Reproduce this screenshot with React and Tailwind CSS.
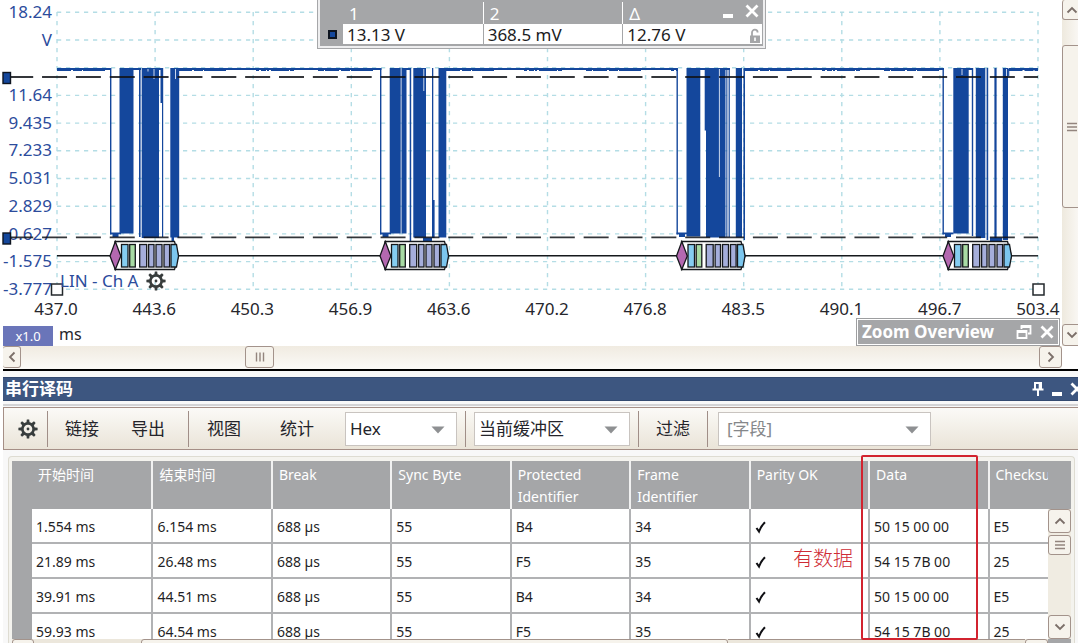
import React from "react";

const SANS = "font-['Noto_Sans','Noto_Sans_CJK_SC',sans-serif]";
const BLUE = "#14479c";

const yLabels = ["18.24", "V", "", "11.64", "9.435", "7.233", "5.031", "2.829", "0.627", "-1.575", "-3.777"];
const xLabels = ["437.0", "443.6", "450.3", "456.9", "463.6", "470.2", "476.8", "483.5", "490.1", "496.7", "503.4"];

const bursts = [
  {
    x: 110,
    blocks: [[119.5, 133.5, 233.5], [139, 140.6, 237], [141.7, 159, 238], [162, 163.2, 237], [170.3, 178.5, 237.5], [171.5, 174, 241]],
    partial: [[160.5, 162, 103]],
    tops: [[133, 141], [157, 163]],
    notches: [[148, 71.5], [154, 79], [175.5, 79]],
  },
  {
    x: 380,
    blocks: [[389.7, 400.7, 233.5], [401.5, 406.5, 233.5], [409.7, 411.2, 241], [413.3, 426, 237.5], [432, 433.3, 238], [438.5, 446.3, 237.5]],
    partial: [],
    tops: [[404, 411]],
    notches: [[423.8, 91]],
    feet: [[423, 432, 241], [432, 434.6, 238]],
  },
  {
    x: 676.5,
    blocks: [[686.5, 700.3, 236.5], [706, 725.5, 237.5], [726.3, 727.4, 237], [728.6, 729.8, 237], [735.8, 742, 237.5], [743.6, 745, 240]],
    partial: [[704.7, 706.5, 130.5]],
    tops: [[700, 706], [725, 730]],
    notches: [[719.4, 177]],
  },
  {
    x: 942.5,
    blocks: [[953.3, 968.7, 233.5], [971.8, 973.2, 236], [975.8, 985.3, 238], [986.6, 988.2, 240], [994.4, 996.6, 241], [1002.8, 1008, 240]],
    partial: [],
    tops: [[968, 973]],
    notches: [[962, 75], [1006.5, 76]],
    feet: [[990, 1002, 241]],
  },
];

const frames = [0, 270, 566.5, 833];

function Burst({ b }) {
  return (
    <g fill={BLUE}>
      <rect x={b.x} y="68" width="1.4" height="166.5" />
      <rect x={b.x} y="232.5" width="11" height="1.8" />
      <rect x={b.x + 2.5} y="233" width="6" height="4" />
      {b.blocks.map(([x1, x2, y], i) => (
        <rect key={i} x={x1} y="68" width={x2 - x1} height={y - 68} />
      ))}
      {b.partial.map(([x1, x2, y], i) => (
        <rect key={i} x={x1} y="69" width={x2 - x1} height={y - 69} />
      ))}
      {b.tops.map(([x1, x2], i) => (
        <rect key={i} x={x1} y="68" width={x2 - x1} height="2" />
      ))}
      {(b.feet || []).map(([x1, x2, y], i) => (
        <rect key={i} x={x1} y={x2 - x1 < 4 ? 200 : 237.5} width={x2 - x1} height={x2 - x1 < 4 ? y - 200 : y - 237.5} />
      ))}
      {b.notches.map(([x, y], i) => (
        <rect key={i} x={x - 0.5} y="69" width="1" height={y - 69} fill="#c9d6ec" />
      ))}
    </g>
  );
}

function Frame({ dx }) {
  const boxes = [
    [121.5, 6.5, "#86cdf1"],
    [129.7, 5.6, "#a8dba4"],
    [139.7, 7, "#a5aedb"],
    [148.6, 5.4, "#a5aedb"],
    [156, 6, "#a5aedb"],
    [164, 5.6, "#a5aedb"],
  ];
  return (
    <g transform={`translate(${dx} 0)`} stroke="#15181c" strokeWidth="1.3">
      <path d="M115 241.5H174.5L178.5 256L174.5 269.5H115Z" fill="#fff" />
      <path d="M115.3 241.5L120.8 256L115.3 269.5L110 256Z" fill="#b468b0" />
      {boxes.map(([x, w, c]) => (
        <rect key={x} x={x} y="244.5" width={w} height="22.5" fill={c} />
      ))}
      <path d="M171 244.5H176.5L178.5 256L176.5 267H171Z" fill="#7cc6ee" />
    </g>
  );
}

function Plot() {
  const xs = Array.from({ length: 11 }, (_, i) => 57 + i * 98.1);
  const ys = Array.from({ length: 11 }, (_, i) => 12.3 + i * 27.7);
  const highs = [[57, 111], [178, 381.4], [446, 678], [744, 944], [1008.5, 1038]];
  const quiet = [[57, 110], [178, 380], [448, 677], [744.5, 943], [1011, 1038]];
  return (
    <svg className="absolute inset-0 h-full w-full" viewBox="0 0 1062 301" preserveAspectRatio="none" aria-hidden="true">
      <g stroke="#b4dde5" strokeWidth="1.4" strokeDasharray="4.2 4.8">
        {xs.map((x) => <path key={x} d={`M${x} 12V290`} />)}
        {ys.map((y) => <path key={y} d={`M57 ${y}H1038`} />)}
      </g>
      {bursts.map((b) => <Burst key={b.x} b={b} />)}
      <g stroke={BLUE}>
        {highs.map(([a, z]) => <path key={a} d={`M${a} 69H${z}`} strokeWidth="2" />)}
        {highs.map(([a, z]) => (
          <path key={a} d={`M${a} 70.4H${z}`} strokeWidth="1.3" strokeDasharray="14 2 9 1 22 30 3 2 5 1 2 2 18 1 4 24 6 1" />
        ))}
        <path d="M1008.7 69V76M178.6 69V237M744.3 69V237" strokeWidth="1.2" />
      </g>
      <g stroke="#101318" strokeOpacity="0.85" strokeWidth="1.8" strokeDasharray="25 8.85">
        <path d="M8.2 77H1038" />
        <path d="M8.2 237.3H1038" />
      </g>
      <g stroke="#15181c" strokeWidth="1.4">
        {quiet.map(([a, z]) => <path key={a} d={`M${a} 255.8H${z}`} />)}
      </g>
      {frames.map((f) => <Frame key={f} dx={f} />)}
      <g fill={BLUE} stroke="#0d1420" strokeWidth="1.4">
        <rect x="3" y="72.5" width="7.5" height="11" />
        <rect x="3" y="233" width="7.5" height="11" />
      </g>
      <g fill="#fff" stroke="#23282c" strokeWidth="1.5">
        <rect x="51.5" y="284" width="11" height="11" />
        <rect x="1033" y="284" width="11" height="11" />
      </g>
    </svg>
  );
}

function Gear({ className }) {
  const teeth = [0, 45, 90, 135, 180, 225, 270, 315];
  return (
    <svg viewBox="0 0 20 20" className={className} aria-hidden="true">
      <g fill="#383d3d">
        {teeth.map((a) => (
          <path key={a} d="M8.3 4.4L8.8 0.4H11.2L11.7 4.4Z" transform={`rotate(${a} 10 10)`} />
        ))}
        <circle cx="10" cy="10" r="1.4" />
      </g>
      <circle cx="10" cy="10" r="5.6" fill="none" stroke="#383d3d" strokeWidth="2.6" />
    </svg>
  );
}

function Cross({ className }) {
  return (
    <svg viewBox="0 0 14 14" className={className} aria-hidden="true">
      <path d="M1.5 1.5L12.5 12.5M12.5 1.5L1.5 12.5" stroke="currentColor" strokeWidth="2.8" fill="none" />
    </svg>
  );
}

function Chevron({ d }) {
  return (
    <svg viewBox="0 0 12 12" className="size-3 shrink-0" aria-hidden="true">
      <path d={d} stroke="#7b6f69" strokeWidth="1.8" fill="none" />
    </svg>
  );
}
const UP = "M1.5 8.5L6 4L10.5 8.5";
const DOWN = "M1.5 3.5L6 8L10.5 3.5";
const LEFT = "M8.5 1.5L4 6L8.5 10.5";
const RIGHT = "M3.5 1.5L8 6L3.5 10.5";

const BTN = "flex shrink-0 items-center justify-center rounded-[3px] border border-[#a3938b] bg-[#f6f3ec]";

function Grip({ vertical }) {
  return (
    <svg viewBox="0 0 12 12" className="size-3 shrink-0" aria-hidden="true">
      <path
        d={vertical ? "M2.5 1.5V10.5M6 1.5V10.5M9.5 1.5V10.5" : "M1 2.5H11M1 6H11M1 9.5H11"}
        stroke="#93857e"
        strokeWidth="1.4"
      />
    </svg>
  );
}

function Measurements() {
  return (
    <div className="absolute top-0 left-[317px] w-[449px] border-x border-b border-[#a6a7a9] bg-[#eeeeef] px-[2px] pb-[2px]">
      <div className="relative bg-[#a5a6a8] px-px pt-[2px] pb-[2px]">
        <table className="w-full table-fixed border-separate border-spacing-0 text-left text-[17px]">
          <colgroup>
            <col className="w-[22px]" />
            <col />
            <col />
            <col />
          </colgroup>
          <thead>
            <tr className="h-[22px] leading-5 text-white">
              <td />
              <th scope="col" className="py-0 pt-0.5 pl-1.5 font-normal">1</th>
              <th scope="col" className="border-l border-white py-0 pt-0.5 pl-1.5 font-normal">2</th>
              <th scope="col" className="border-l border-white py-0 pt-0.5 pl-1.5 font-normal">Δ</th>
            </tr>
          </thead>
          <tbody>
            <tr className="h-5 leading-[18px] text-[#1c1c22]">
              <td className="p-0">
                <span className="mx-auto block size-[9px] border-2 border-[#0d1420] bg-[#14479c]" />
              </td>
              <td className="bg-white py-0 pt-0.5 pl-1">13.13 V</td>
              <td className="border-l border-[#a5a6a8] bg-white py-0 pt-0.5 pl-1">368.5 mV</td>
              <td className="border-l border-[#a5a6a8] bg-white py-0 pt-0.5 pl-1">12.76 V</td>
            </tr>
          </tbody>
        </table>
        <div className="absolute top-1 right-1 flex items-start gap-3 text-white">
          <button aria-label="Minimize" className="flex h-3.5 w-2.5 items-end">
            <span className="h-1 w-full bg-white" />
          </button>
          <button aria-label="Close" className="size-3.5">
            <Cross className="size-3.5" />
          </button>
        </div>
        <button aria-label="Lock" className="absolute right-0.5 bottom-0.5 h-4 w-3">
          <svg viewBox="0 0 12 16" className="h-4 w-3" aria-hidden="true">
            <path d="M3 8V4.5A2.8 2.8 0 0 1 8.6 4.5" fill="none" stroke="#a5a6a8" strokeWidth="1.8" />
            <rect x="1" y="7.5" width="10" height="7.5" fill="#a5a6a8" />
            <rect x="5.2" y="9.5" width="1.6" height="3.5" fill="#fff" />
          </svg>
        </button>
      </div>
    </div>
  );
}

function Scope() {
  return (
    <section className="relative flex" aria-label="LIN">
      <div className="relative min-w-0 flex-1">
        <div className="relative h-[301px]">
          <div className="flex h-full w-[52px] flex-col justify-between text-right text-[17px] leading-6 text-[#2c4c9c]">
            {yLabels.map((l, i) => <div key={i} className="h-6">{l}</div>)}
          </div>
          <Plot />
          <div className="absolute bottom-2 left-[60px] flex items-center gap-2 text-[17px] leading-6 text-[#2c4c9c]">
            <span>LIN - Ch A</span>
            <button aria-label="LIN settings"><Gear className="size-5" /></button>
          </div>
        </div>
        <div className="-mt-1 flex h-6 justify-between pl-8 text-[17px] leading-6 text-[#26262c]">
          {xLabels.map((l) => <div key={l} className="w-12 text-center">{l}</div>)}
        </div>
        <div className="flex h-[25px] items-end gap-1.5 pl-[3px] leading-5">
          <span className="w-[50px] bg-[#6a75b9] text-center text-[13px] leading-5 text-white">x1.0</span>
          <span className="pb-0.5 text-[16px] text-[#26262c]">ms</span>
        </div>
        <div className="absolute right-0.5 bottom-0 flex h-7 w-[204px] items-center border border-[#9d9ea0] bg-white p-px">
          <div className="flex h-full w-full items-center bg-[#a5a6a8] px-1 text-white">
            <span className="flex-1 text-[17px] leading-6 font-bold">Zoom Overview</span>
            <button aria-label="Restore" className="mr-2">
              <svg viewBox="0 0 16 16" className="size-4" aria-hidden="true">
                <path d="M5.5 5V2H14.5V9.5H12M4.5 3H15" fill="none" stroke="#fff" strokeWidth="1.8" />
                <path d="M1.5 7H10.5V14H1.5ZM1 8H11" fill="none" stroke="#fff" strokeWidth="1.8" />
              </svg>
            </button>
            <button aria-label="Close overview"><Cross className="size-3.5" /></button>
          </div>
        </div>
      </div>
      <div className="flex w-[16px] flex-col overflow-hidden bg-gradient-to-r from-[#eee9de] to-[#f9f7f3]">
        <button aria-label="Scroll up" className={BTN + " h-[20px] w-[20px] border-t-0"}><Chevron d={UP} /></button>
        <div className="h-[25px]" />
        <div className={BTN + " h-[163px] w-[20px]"}><Grip /></div>
        <div className="flex-1" />
        <button aria-label="Scroll down" className={BTN + " h-[22px] w-[20px]"}><Chevron d={DOWN} /></button>
      </div>
      <Measurements />
    </section>
  );
}

const SELECT = "h-[34px] w-full appearance-none border border-[#c9c4c0] bg-white text-[17px]";

function Select({ label, value, width, color, pad }) {
  return (
    <div className={"relative " + width}>
      <select aria-label={label} defaultValue={value} className={SELECT + " " + color + " " + pad}>
        <option>{value}</option>
      </select>
      <svg viewBox="0 0 14 8" className="pointer-events-none absolute top-3.5 right-3 h-2 w-3.5" aria-hidden="true">
        <path d="M0.5 0.5H13.5L7 7.5Z" fill="#8e9092" />
      </svg>
    </div>
  );
}

function Sep({ className }) {
  return <div className={"h-9 w-px shrink-0 bg-[#a08e87] " + className} />;
}

function Toolbar() {
  const b = "h-9 shrink-0 text-center text-[17px] leading-9 ";
  return (
    <div className="flex h-[43px] items-center border-y border-l border-[#a58f86] bg-gradient-to-b from-[#fbfaf7] to-[#eae4d8] text-[#24242a]">
      <button aria-label="Settings" className="flex w-[43px] shrink-0 items-center justify-center pl-1">
        <Gear className="size-5" />
      </button>
      <Sep className="" />
      <button className={b + "w-[68px]"}>链接</button>
      <button className={b + "w-[64px]"}>导出</button>
      <Sep className="ml-2" />
      <button className={b + "w-[70px]"}>视图</button>
      <button className={b + "w-[76px]"}>统计</button>
      <Select label="Format" value="Hex" width="ml-2.5 w-28" color="text-[#24242a]" pad="pl-1" />
      <Sep className="ml-2" />
      <Select label="Buffer" value="当前缓冲区" width="ml-2 w-[156px]" color="text-[#24242a]" pad="pl-1" />
      <Sep className="ml-2" />
      <button className={b + "w-[68px]"}>过滤</button>
      <Sep className="" />
      <Select label="Field" value="[字段]" width="ml-2.5 w-[213px]" color="text-[#85878a]" pad="pl-2" />
    </div>
  );
}

const headers = ["开始时间", "结束时间", "Break", "Sync Byte", "Protected Identifier", "Frame Identifier", "Parity OK", "Data", "Checksum"];
const rows = [
  ["1.554 ms", "6.154 ms", "688 µs", "55", "B4", "34", "✓", "50 15 00 00", "E5"],
  ["21.89 ms", "26.48 ms", "688 µs", "55", "F5", "35", "✓", "54 15 7B 00", "25"],
  ["39.91 ms", "44.51 ms", "688 µs", "55", "B4", "34", "✓", "50 15 00 00", "E5"],
  ["59.93 ms", "64.54 ms", "688 µs", "55", "F5", "35", "✓", "54 15 7B 00", "25"],
];

function Tick() {
  return (
    <svg viewBox="0 0 12 14" className="h-3.5 w-3" role="img" aria-label="OK">
      <path d="M1.5 8L4 11.5C5.5 7.5 7.5 4.5 10 2.2" fill="none" stroke="#101014" strokeWidth="2.1" />
    </svg>
  );
}

function DecodeTable() {
  return (
    <div className="relative mr-[3px] ml-[5px] flex min-h-0 flex-1 flex-col rounded-t border border-b-0 border-[#dedcd2] bg-[#f4f3ee] px-[3px] pt-[4px]">
      <div className="flex min-h-0 flex-1 overflow-hidden">
        <div className="min-w-0 flex-1">
          <table className="w-full table-fixed border-separate border-spacing-0 bg-white text-left">
            <colgroup>
              <col className="w-5" />
              {headers.slice(0, 8).map((h) => <col key={h} className="w-[11.53%]" />)}
              <col />
            </colgroup>
            <thead>
              <tr className="h-12 bg-[#a5a6a8] align-top text-sm leading-[22px] text-white">
                <td />
                {headers.map((h, i) => (
                  <th
                    key={h}
                    scope="col"
                    className={
                      "overflow-hidden py-0 pt-[3px] pl-1.5 font-normal " +
                      (i ? "border-l-2 border-[#f1f1f1] " : "") +
                      (i === 8 ? "pr-0" : "pr-5")
                    }
                  >
                    {h}
                  </th>
                ))}
              </tr>
            </thead>
            <tbody>
              {rows.map((r, k) => (
                <tr key={k} className="text-sm leading-5 text-[#1f1f26]">
                  <td className="bg-[#a5a6a8]" />
                  {r.map((c, i) => (
                    <td
                      key={i}
                      className={"h-[35px] border-b-2 border-[#b1b2b4] py-0 pt-0.5 pr-0 pl-1 whitespace-nowrap " + (i ? "border-l-2" : "")}
                    >
                      {c === "✓" ? <Tick /> : c}
                    </td>
                  ))}
                </tr>
              ))}
            </tbody>
          </table>
        </div>
        <div className="flex w-[23px] flex-col bg-[#f0ece2]">
          <div className="h-12 shrink-0 bg-[#a5a6a8]" />
          <button aria-label="Table scroll up" className={BTN + " h-6 w-full"}><Chevron d={UP} /></button>
          <div className={BTN + " mt-0.5 h-5 w-full"}><Grip /></div>
          <div className="flex-1" />
          <button aria-label="Table scroll down" className={BTN + " h-6 w-full"}><Chevron d={DOWN} /></button>
        </div>
      </div>
      <div className="flex h-1 shrink-0 overflow-hidden bg-[#ece7dc]">
        <button aria-label="Table scroll left" className={BTN + " h-5 w-[22px]"}><Chevron d={LEFT} /></button>
        <div className={BTN + " ml-[107px] h-5 w-[587px]"}><Grip vertical /></div>
        <div className="flex-1 border-t border-[#a3938b]" />
        <button aria-label="Table scroll right" className={BTN + " h-5 w-[23px]"}><Chevron d={RIGHT} /></button>
        <div className="w-[23px] bg-[#a5a6a8]" />
      </div>
      <div className="pointer-events-none absolute -top-[2px] right-[96px] bottom-[3px] w-[117px] rounded-xs border-2 border-[#d2232f]" />
      <div className="pointer-events-none absolute top-[89px] right-[221px] font-['Noto_Sans_CJK_SC',sans-serif] text-xl leading-6 font-light text-[#cf2b35]">
        有数据
      </div>
    </div>
  );
}

export default function App() {
  return (
    <main className={"flex h-screen flex-col overflow-hidden bg-white pr-[2px] " + SANS}>
      <Scope />
      <div className="ml-[3px] flex h-[23px] shrink-0 bg-gradient-to-b from-[#f0ebe1] to-[#fbfaf7]">
        <button aria-label="Scroll left" className={BTN + " h-[22px] w-[18px] border-l-0"}><Chevron d={LEFT} /></button>
        <div className="w-[224px]" />
        <div className={BTN + " h-[22px] w-[29px]"}><Grip vertical /></div>
        <div className="flex-1" />
        <button aria-label="Scroll right" className={BTN + " h-[22px] w-[23px]"}><Chevron d={RIGHT} /></button>
        <div className="w-4 bg-white" />
      </div>
      <div className="ml-[3px] h-[2px] shrink-0 bg-black" />
      <section className="ml-[3px] flex min-h-0 flex-1 flex-col overflow-hidden bg-[#f8f8f8] pt-1.5" aria-label="串行译码">
        <header className="flex h-[24px] shrink-0 items-center border-y border-[#33496f] bg-[#3d5680] text-white">
          <h2 className="flex-1 pl-0.5 text-[17px] leading-5 font-bold">串行译码</h2>
          <div className="-mr-1.5 flex items-center gap-2">
            <button aria-label="Pin">
              <svg viewBox="0 0 12 16" className="h-4 w-3" aria-hidden="true">
                <path d="M3 8V2H9V8M0.5 8.5H11.5M6 9V15" fill="none" stroke="#fff" strokeWidth="2" />
                <path d="M7.5 2V8" stroke="#fff" strokeWidth="1.6" />
              </svg>
            </button>
            <button aria-label="Minimize panel" className="flex h-3.5 w-2.5 items-end">
              <span className="h-1 w-full bg-white" />
            </button>
            <button aria-label="Close panel"><Cross className="size-3.5" /></button>
          </div>
        </header>
        <div className="mt-[3px] h-[2px] shrink-0 bg-[#d3d3d5]" />
        <div className="mt-px shrink-0"><Toolbar /></div>
        <div className="h-1.5 shrink-0" />
        <DecodeTable />
      </section>
    </main>
  );
}
